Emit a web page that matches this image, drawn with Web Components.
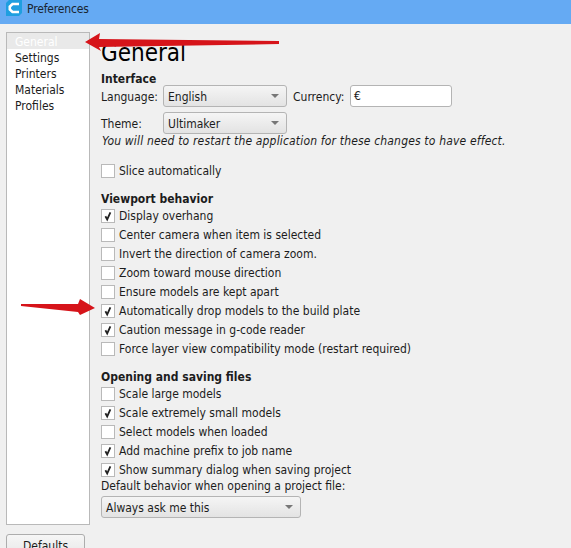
<!DOCTYPE html>
<html>
<head>
<meta charset="utf-8">
<title>Preferences</title>
<style>
    html, body { margin: 0; height: 100%; overflow: hidden; }
    body {
        background: #f0f0f0;
        color: #1c1c1c;
        font: 12px "DejaVu Sans Condensed", "DejaVu Sans", sans-serif;
    }
    /* labels sit a pixel under the middle of their row */
    form-row > span { padding-top: 2px; }
</style>
</head>
<body>
<prefs-window>
    <side-item slot="side" selected>General</side-item>
    <side-item slot="side">Settings</side-item>
    <side-item slot="side">Printers</side-item>
    <side-item slot="side">Materials</side-item>
    <side-item slot="side">Profiles</side-item>

    <h-title>General</h-title>

    <h-section>Interface</h-section>
    <form-row style="height:26px;margin-top:-3px">
        <span style="width:62px">Language:</span>
        <combo-box width="124">English</combo-box>
        <span style="margin-left:6px;width:57px">Currency:</span>
        <text-box>€</text-box>
    </form-row>
    <form-row style="height:26px;margin-top:1px">
        <span style="width:62px">Theme:</span>
        <combo-box width="124">Ultimaker</combo-box>
    </form-row>
    <note-line style="margin-top:-3px">You will need to restart the application for these changes to have effect.</note-line>

    <check-row style="margin-top:12px">Slice automatically</check-row>

    <h-section style="margin-top:10px">Viewport behavior</h-section>
    <check-row checked>Display overhang</check-row>
    <check-row>Center camera when item is selected</check-row>
    <check-row>Invert the direction of camera zoom.</check-row>
    <check-row>Zoom toward mouse direction</check-row>
    <check-row>Ensure models are kept apart</check-row>
    <check-row checked>Automatically drop models to the build plate</check-row>
    <check-row checked>Caution message in g-code reader</check-row>
    <check-row>Force layer view compatibility mode (restart required)</check-row>

    <h-section style="margin-top:10px">Opening and saving files</h-section>
    <check-row>Scale large models</check-row>
    <check-row checked>Scale extremely small models</check-row>
    <check-row>Select models when loaded</check-row>
    <check-row checked>Add machine prefix to job name</check-row>
    <check-row checked>Show summary dialog when saving project</check-row>
    <form-row style="height:16px;margin-top:-1px">Default behavior when opening a project file:</form-row>
    <form-row style="height:22px;margin-top:2px"><combo-box width="200">Always ask me this</combo-box></form-row>
</prefs-window>

<script>
class PrefsWindow extends HTMLElement {
    constructor() {
        super();
        this._root = this.attachShadow({ mode: "open" });
    }
    connectedCallback() {
        this._root.innerHTML = `
            <style>
                :host {
                    display: flex;
                    flex-direction: column;
                    width: 571px;
                    height: 548px;
                    position: relative;
                    overflow: hidden;
                }
                .titlebar {
                    display: flex;
                    align-items: flex-start;
                    gap: 5px;
                    height: 24px;
                    flex: none;
                    padding-left: 6px;
                    background: #65aaf3;
                    color: #1a2530;
                    line-height: 19px;
                }
                .titlebar span { letter-spacing: -0.15px; }
                .titlebar svg { display: block; }
                .main {
                    display: flex;
                    flex: none;
                    height: 493px;
                    margin-top: 8px;
                    padding-left: 6px;
                }
                .side {
                    width: 84px;
                    box-sizing: border-box;
                    flex: none;
                    background: #fff;
                    border: 1px solid #b9b9b9;
                }
                .content {
                    display: flex;
                    flex-direction: column;
                    padding: 5px 0 0 11px;
                    min-width: 0;
                }
                .foot {
                    padding: 9px 0 0 6px;
                }
                button {
                    font: inherit;
                    color: inherit;
                    width: 79px;
                    height: 28px;
                    box-sizing: border-box;
                    border: 1px solid #adadad;
                    border-radius: 3px;
                    background: linear-gradient(#f6f6f6, #e4e4e4);
                    padding: 0 0 4px;
                }
                .arrow {
                    position: absolute;
                    left: 0;
                    top: 0;
                    pointer-events: none;
                }
            </style>
            <div class="titlebar">
                <svg width="16" height="16" viewBox="0 0 16 16">
                    <path d="M3 0H16V13L13 16H0V3Z" fill="#1f9fe0"/>
                    <path d="M13 4H6.5L3.8 6.5V9.5L6.5 12H13" fill="none" stroke="#fff" stroke-width="2.6"/>
                </svg>
                <span>Preferences</span>
            </div>
            <div class="main">
                <div class="side"><slot name="side"></slot></div>
                <div class="content"><slot></slot></div>
            </div>
            <div class="foot"><button>Defaults</button></div>
            <svg class="arrow" width="571" height="548" viewBox="0 0 571 548">
                <path d="M85 42L100 33L99 39L279 41L279 44L99 47L101 51Z" fill="#d6141a"/>
                <path d="M21 304L78 304L80 299L95 308L80 315L78 312L21 306Z" fill="#d6141a"/>
            </svg>
        `;
    }
}
window.customElements.define("prefs-window", PrefsWindow);

class SideItem extends HTMLElement {
    constructor() {
        super();
        this.attachShadow({ mode: "open" }).innerHTML = `
            <style>
                :host {
                    display: block;
                    height: 16px;
                    line-height: 18px;
                    padding-left: 8px;
                }
                :host([selected]) {
                    background: #e9e9e9;
                    color: #fff;
                }
            </style>
            <slot></slot>
        `;
    }
}
window.customElements.define("side-item", SideItem);

class HTitle extends HTMLElement {
    constructor() {
        super();
        this.attachShadow({ mode: "open" }).innerHTML = `
            <style>
                :host {
                    display: block;
                    height: 33px;
                    line-height: 32px;
                    font-size: 24px;
                    color: #000;
                }
            </style>
            <slot></slot>
        `;
    }
}
window.customElements.define("h-title", HTitle);

class HSection extends HTMLElement {
    constructor() {
        super();
        this.attachShadow({ mode: "open" }).innerHTML = `
            <style>
                :host {
                    display: block;
                    height: 16px;
                    line-height: 18px;
                    font-weight: bold;
                }
            </style>
            <slot></slot>
        `;
    }
}
window.customElements.define("h-section", HSection);

class FormRow extends HTMLElement {
    constructor() {
        super();
        this.attachShadow({ mode: "open" }).innerHTML = `
            <style>
                :host {
                    display: flex;
                    align-items: center;
                    white-space: nowrap;
                }
            </style>
            <slot></slot>
        `;
    }
}
window.customElements.define("form-row", FormRow);

class NoteLine extends HTMLElement {
    constructor() {
        super();
        this.attachShadow({ mode: "open" }).innerHTML = `
            <style>
                :host {
                    display: block;
                    height: 16px;
                    line-height: 16px;
                    padding-left: 1px;
                    font-style: italic;
                    letter-spacing: 0.17px;
                    white-space: nowrap;
                }
            </style>
            <slot></slot>
        `;
    }
}
window.customElements.define("note-line", NoteLine);

class ComboBox extends HTMLElement {
    constructor() {
        super();
        this.attachShadow({ mode: "open" }).innerHTML = `
            <style>
                :host {
                    display: flex;
                    align-items: center;
                    justify-content: space-between;
                    box-sizing: border-box;
                    height: 22px;
                    padding: 0 7px 0 4px;
                    border: 1px solid #b4b4b4;
                    border-radius: 3px;
                    background: linear-gradient(#f5f5f5, #e3e3e3);
                    flex: none;
                }
                span { padding-top: 2px; }
                i {
                    width: 0;
                    height: 0;
                    border: 4px solid transparent;
                    border-top: 4px solid #777;
                    border-bottom: 0;
                }
            </style>
            <span><slot></slot></span><i></i>
        `;
    }
    connectedCallback() {
        this.style.width = this.getAttribute("width") + "px";
    }
}
window.customElements.define("combo-box", ComboBox);

class TextBox extends HTMLElement {
    constructor() {
        super();
        this.attachShadow({ mode: "open" }).innerHTML = `
            <style>
                :host {
                    display: block;
                    box-sizing: border-box;
                    width: 102px;
                    height: 22px;
                    line-height: 20px;
                    padding-left: 3px;
                    border: 1px solid #b4b4b4;
                    border-radius: 3px;
                    background: #fff;
                    flex: none;
                }
            </style>
            <slot></slot>
        `;
    }
}
window.customElements.define("text-box", TextBox);

class CheckRow extends HTMLElement {
    constructor() {
        super();
        this.attachShadow({ mode: "open" }).innerHTML = `
            <style>
                :host {
                    display: flex;
                    align-items: center;
                    gap: 4px;
                    height: 19px;
                    white-space: nowrap;
                }
                .box {
                    width: 12px;
                    height: 12px;
                    flex: none;
                    border: 1px solid #b9b9b9;
                    background: #fff;
                }
                svg { display: none; }
                :host([checked]) svg { display: block; }
            </style>
            <div class="box">
                <svg width="12" height="12" viewBox="0 0 12 12">
                    <path d="M3.4 6.2L5.2 9.4L8.4 2.4" fill="none" stroke="#222" stroke-width="1.8"/>
                </svg>
            </div>
            <span><slot></slot></span>
        `;
    }
}
window.customElements.define("check-row", CheckRow);
</script>
</body>
</html>
